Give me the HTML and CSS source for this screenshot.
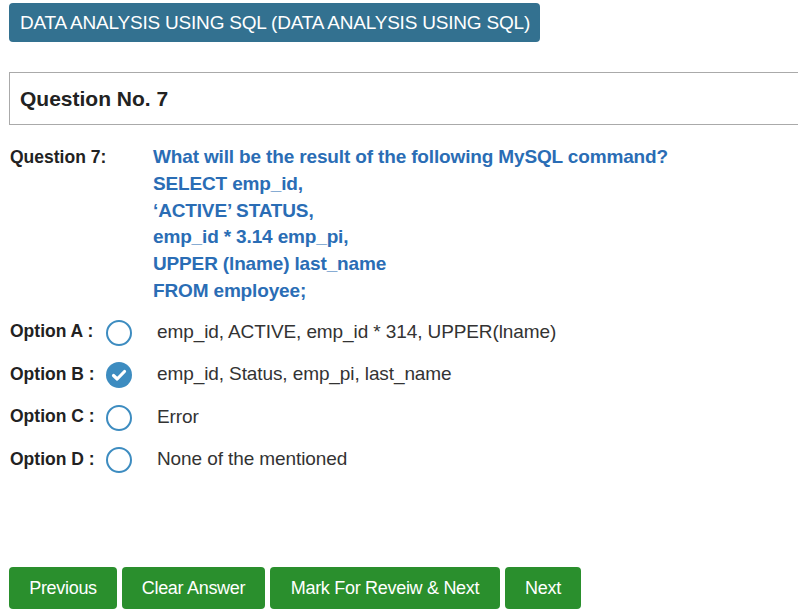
FILE: index.html
```html
<!DOCTYPE html>
<html>
<head>
<meta charset="utf-8">
<link rel="stylesheet" href="styles.css">
</head>
<body>
<div class="page">
  <div class="subject">DATA ANALYSIS USING SQL (DATA ANALYSIS USING SQL)</div>
  <div class="qbox">Question No. 7</div>
  <div class="question">
    <div class="qlabel">Question 7:</div>
    <div class="qtext">
      <div>What will be the result of the following MySQL command?</div>
      <div>SELECT emp_id,</div>
      <div>‘ACTIVE’ STATUS,</div>
      <div>emp_id * 3.14 emp_pi,</div>
      <div>UPPER (lname) last_name</div>
      <div>FROM employee;</div>
    </div>
  </div>
  <div class="options">
    <div class="opt">
      <span class="olabel">Option A :</span>
      <span class="radio"></span>
      <span class="otext">emp_id, ACTIVE, emp_id * 314, UPPER(lname)</span>
    </div>
    <div class="opt">
      <span class="olabel">Option B :</span>
      <span class="radio checked"><svg viewBox="0 0 26 26" width="26" height="26"><path d="M7.5 13.5 L11.2 17 L18.5 9.5" fill="none" stroke="#fff" stroke-width="3.2" stroke-linecap="round" stroke-linejoin="round"/></svg></span>
      <span class="otext">emp_id, Status, emp_pi, last_name</span>
    </div>
    <div class="opt">
      <span class="olabel">Option C :</span>
      <span class="radio"></span>
      <span class="otext">Error</span>
    </div>
    <div class="opt">
      <span class="olabel">Option D :</span>
      <span class="radio"></span>
      <span class="otext">None of the mentioned</span>
    </div>
  </div>
  <div class="buttons">
    <button class="btn btn-prev">Previous</button>
    <button class="btn btn-clear">Clear Answer</button>
    <button class="btn btn-mark">Mark For Reveiw &amp; Next</button>
    <button class="btn btn-next">Next</button>
  </div>
</div>
</body>
</html>
```
FILE: styles.css
```css
html, body {
  margin: 0;
  padding: 0;
  background: #fff;
}
body {
  font-family: "Liberation Sans", Arial, sans-serif;
  color: #333;
  overflow: hidden;
}
.page {
  padding: 3px 0 0 9px;
  display: flex;
  flex-direction: column;
  align-items: flex-start;
}
.subject {
  background: #337190;
  color: #fff;
  font-size: 19px;
  letter-spacing: -0.2px;
  height: 39px;
  line-height: 39px;
  padding: 0 10px 0 11px;
  border-radius: 4px;
}
.qbox {
  margin-top: 30px;
  align-self: stretch;
  box-sizing: border-box;
  height: 53px;
  border: 1px solid #aaa;
  border-right: none;
  padding-left: 10px;
  line-height: 51px;
  font-size: 21px;
  font-weight: bold;
  color: #222;
}
.question {
  margin-top: 19px;
  display: flex;
  margin-left: 1px;
}
.qlabel {
  width: 143px;
  font-size: 17.5px;
  font-weight: bold;
  color: #222;
  line-height: 27px;
}
.qtext {
  color: #2a6db5;
  font-size: 19px;
  font-weight: bold;
  line-height: 26.8px;
  letter-spacing: -0.15px;
}
.options {
  margin-top: 14px;
  display: flex;
  flex-direction: column;
  gap: 16.5px;
  margin-left: 1px;
}
.opt {
  display: flex;
  align-items: center;
  height: 26px;
}
.olabel {
  width: 96px;
  font-size: 17.5px;
  font-weight: bold;
  color: #222;
}
.radio {
  box-sizing: border-box;
  width: 26px;
  height: 26px;
  border: 2px solid #3d8cc0;
  border-radius: 50%;
  display: flex;
  align-items: center;
  justify-content: center;
  margin-top: 2px;
}
.radio.checked {
  background: #3d8cc0;
  border: none;
}
.radio svg {
  display: block;
}
.otext {
  margin-left: 25px;
  font-size: 19px;
  color: #333;
  letter-spacing: -0.1px;
}
.buttons {
  margin-top: 95px;
  display: flex;
  gap: 5px;
}
.btn {
  font-family: "Liberation Sans", Arial, sans-serif;
  background: #2a8f2d;
  color: #fff;
  border: none;
  border-radius: 4px;
  height: 42px;
  font-size: 18px;
  letter-spacing: -0.3px;
  padding: 0;
}
.btn-prev { width: 108px; }
.btn-clear { width: 143px; }
.btn-mark { width: 230px; }
.btn-next { width: 76px; }
```
